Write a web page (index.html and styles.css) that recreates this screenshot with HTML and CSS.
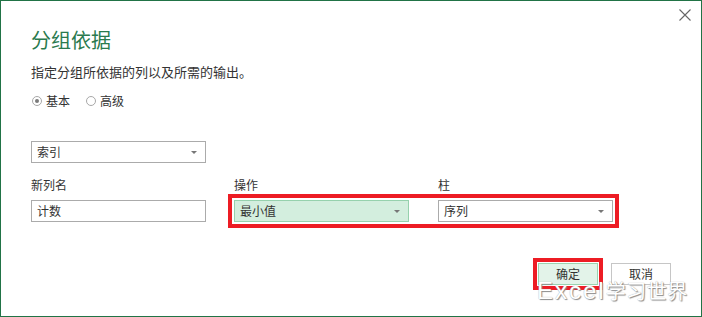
FILE: index.html
```html
<!DOCTYPE html>
<html lang="zh-CN">
<head>
    <meta charset="UTF-8">
    <meta name="viewport" content="width=device-width, initial-scale=1.0">
    <title>分组依据</title>
    <link rel="stylesheet" href="styles.css">
</head>
<body>
    <div class="dialog">
        <div class="top">
            <span class="close">
                <svg width="12" height="12" viewBox="0 0 12 12">
                    <path d="M0.5 0.5 11.5 11.5M11.5 0.5 0.5 11.5" stroke="#666" stroke-width="1.1" fill="none"/>
                </svg>
            </span>
        </div>
        <h2 class="title">分组依据</h2>
        <p class="desc">指定分组所依据的列以及所需的输出。</p>

        <div class="radios">
            <span class="radio checked"></span><span class="radio-text">基本</span>
            <span class="radio"></span><span class="radio-text">高级</span>
        </div>

        <div class="select key">
            <span>索引</span><i class="arrow"></i>
        </div>

        <div class="labels">
            <span class="c1">新列名</span>
            <span class="c2">操作</span>
            <span class="c3">柱</span>
        </div>
        <div class="inputs">
            <div class="select c1"><span>计数</span></div>
            <!-- highlighted pair -->
            <div class="mark">
                <div class="select green"><span>最小值</span><i class="arrow"></i></div>
                <div class="select"><span>序列</span><i class="arrow"></i></div>
            </div>
        </div>

        <div class="actions">
            <button class="btn ok">确定</button>
            <button class="btn">取消</button>
        </div>

        <div class="watermark"><span class="wm-latin">Excel</span>学习世界</div>
    </div>
</body>
</html>
```

FILE: styles.css
```css
body {
    margin: 0;
    font-family: "Noto Sans CJK SC", sans-serif;
    color: #333;
    background: #fff;
}
.dialog {
    position: relative;
    width: 702px;
    height: 317px;
    box-sizing: border-box;
    border: 1px solid #217346;
    padding: 0 30px;
    overflow: hidden;
}
.top {
    height: 29px;
    display: flex;
    justify-content: flex-end;
    margin-right: -20px;
}
.close {
    margin-top: 8px;
    width: 12px;
    height: 12px;
    display: block;
}
.close svg {
    display: block;
}
.title {
    margin: 0;
    font-size: 20px;
    line-height: 20px;
    font-weight: normal;
    color: #2a7a4e;
}
.desc {
    margin: 15px 0 0;
    font-size: 13px;
    line-height: 13px;
}
.radios {
    margin-top: 17px;
    display: flex;
    align-items: center;
    height: 12px;
    font-size: 12px;
    line-height: 12px;
}
.radio {
    width: 10px;
    height: 10px;
    box-sizing: border-box;
    border: 1px solid #a8a8a8;
    border-radius: 50%;
    margin-left: 1px;
    position: relative;
}
.radio.checked::after {
    content: "";
    position: absolute;
    left: 2px;
    top: 2px;
    width: 4px;
    height: 4px;
    border-radius: 50%;
    background: #7a7a7a;
}
.radio-text {
    margin-left: 4px;
    margin-right: 15px;
}
.select {
    width: 175px;
    height: 22px;
    box-sizing: border-box;
    border: 1px solid #ababab;
    background: #fff;
    display: flex;
    align-items: center;
    justify-content: space-between;
    padding: 0 8px 0 5px;
    font-size: 12px;
    line-height: 12px;
}
.select.key {
    margin-top: 34px;
}
.select.green {
    background: #d3eede;
    border-color: #96d1ad;
}
.arrow {
    width: 0;
    height: 0;
    border-left: 3px solid transparent;
    border-right: 3px solid transparent;
    border-top: 3px solid #777;
}
.labels {
    margin-top: 16px;
    display: flex;
    font-size: 12px;
    line-height: 12px;
}
.labels span {
    width: 175px;
}
.c1 {
    margin-right: 28px;
}
.labels .c2 {
    margin-right: 29px;
}
.inputs {
    margin-top: 9px;
    display: flex;
}
.mark {
    display: flex;
    gap: 29px;
    outline: 4px solid #ed1c24;
    outline-offset: 2px;
}
.actions {
    margin-top: 41px;
    display: flex;
    justify-content: flex-end;
    gap: 13px;
}
.btn {
    width: 60px;
    height: 22px;
    box-sizing: border-box;
    border: 1px solid #c6c6c6;
    background: #fff;
    font-family: inherit;
    font-size: 12px;
    line-height: 12px;
    color: #333;
    padding: 0;
}
.btn.ok {
    background: #e3f3e9;
    border-color: #9ad3b0;
    outline: 4px solid #ed1c24;
    outline-offset: 1px;
}
.watermark {
    position: absolute;
    left: 536px;
    top: 278px;
    font-size: 20px;
    line-height: 24px;
    color: #fff;
    letter-spacing: 0.5px;
    text-shadow: 1px 1px 1px #8a8a8a, 0 0 1px #9a9a9a;
}
.wm-latin {
    font-family: "Liberation Sans", sans-serif;
    font-size: 24px;
    letter-spacing: 2px;
}
```
